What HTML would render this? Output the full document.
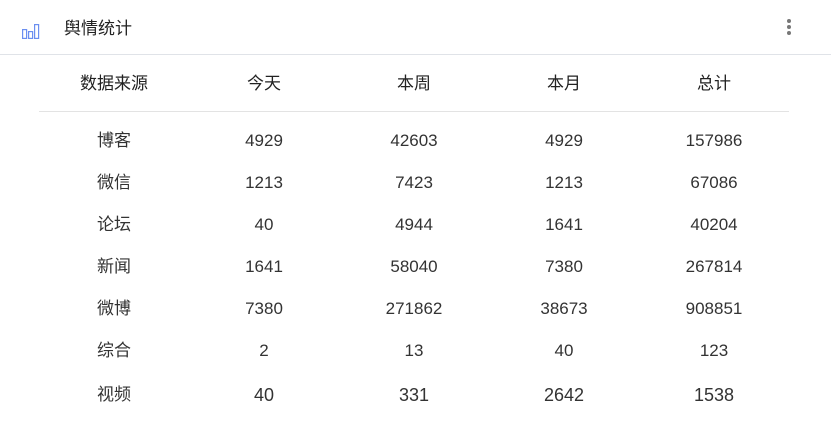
<!DOCTYPE html>
<html><head><meta charset="utf-8"><style>
body{margin:0;width:831px;height:430px;background:#fff;font-family:"Liberation Sans","Noto Sans CJK SC",sans-serif;color:#333;overflow:hidden;position:relative}
.hd{position:absolute;left:0;top:0;width:831px;height:54px;border-bottom:1px solid #e0e3e8}
.ttl{position:absolute;left:64px;top:14px;font-size:17px;color:#222}
.dots{position:absolute;left:787px;top:19px}
.dots i{display:block;width:4px;height:4px;border-radius:2px;background:#777;margin-bottom:2px}
.row{position:absolute;left:39px;width:750px;display:flex;line-height:24px}
.row div{width:150px;text-align:center}
.h{top:72px;font-size:17px;color:#222}
.line{position:absolute;left:39px;top:111px;width:750px;height:1px;background:#e3e3e3}
.b{font-size:17px;color:#333}
</style></head><body>
<div class="hd">
<svg style="position:absolute;left:22px;top:24px" width="18" height="15" viewBox="0 0 18 15"><g fill="none" stroke="#6b8ff0" stroke-width="1.2"><rect x="0.6" y="5.6" width="4" height="8.8"/><rect x="6.6" y="7.6" width="4" height="6.8"/><rect x="12.6" y="0.6" width="4" height="13.8"/></g></svg>
<div class="ttl">舆情统计</div>
<div class="dots"><i></i><i></i><i></i></div>
</div>
<div class="row h"><div>数据来源</div><div>今天</div><div>本周</div><div>本月</div><div>总计</div></div>
<div class="line"></div>
<div class="row b" style="top:129px"><div>博客</div><div>4929</div><div>42603</div><div>4929</div><div>157986</div></div>
<div class="row b" style="top:171px"><div>微信</div><div>1213</div><div>7423</div><div>1213</div><div>67086</div></div>
<div class="row b" style="top:213px"><div>论坛</div><div>40</div><div>4944</div><div>1641</div><div>40204</div></div>
<div class="row b" style="top:255px"><div>新闻</div><div>1641</div><div>58040</div><div>7380</div><div>267814</div></div>
<div class="row b" style="top:297px"><div>微博</div><div>7380</div><div>271862</div><div>38673</div><div>908851</div></div>
<div class="row b" style="top:339px"><div>综合</div><div>2</div><div>13</div><div>40</div><div>123</div></div>
<div class="row b" style="top:383px;font-size:18px"><div style="font-size:17px">视频</div><div>40</div><div>331</div><div>2642</div><div>1538</div></div>
</body></html>
